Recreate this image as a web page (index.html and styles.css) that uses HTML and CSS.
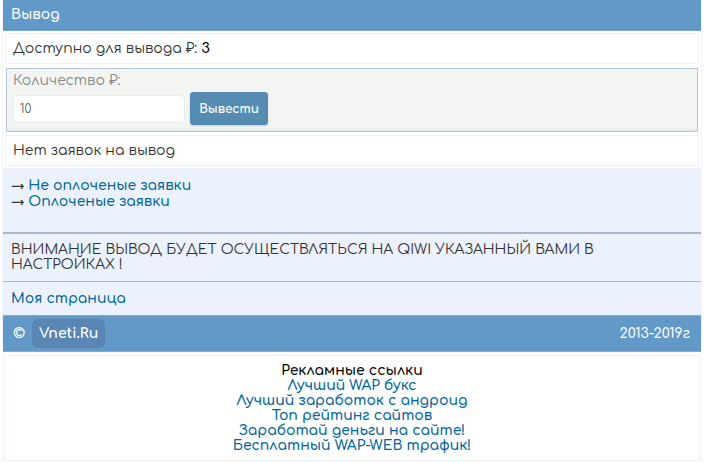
FILE: index.html
```html
<!DOCTYPE html>
<html lang="ru">
<head>
    <meta charset="UTF-8">
    <meta name="viewport" content="width=device-width, initial-scale=1.0">
    <title>Вывод</title>
    <link rel="stylesheet" href="styles.css">
</head>
<body>
    <div class="page">
        <header class="title">Вывод</header>

        <main>
            <div class="block">Доступно для вывода ₽: <b>3</b></div>

            <form class="form" action="#" method="post">
                <label for="amount">Количество ₽:</label>
                <div class="row">
                    <input type="text" id="amount" name="amount" value="10">
                    <button type="submit">Вывести</button>
                </div>
            </form>

            <div class="block">Нет заявок на вывод</div>

            <nav class="menu requests">
                <div>→ <a href="#">Не оплоченые заявки</a></div>
                <div>→ <a href="#">Оплоченые заявки</a></div>
            </nav>
            <div class="menu notice">ВНИМАНИЕ ВЫВОД БУДЕТ ОСУЩЕСТВЛЯТЬСЯ НА QIWI УКАЗАННЫЙ ВАМИ В НАСТРОЙКАХ !</div>
            <div class="menu"><a href="#">Моя страница</a></div>
        </main>

        <footer class="footer">
            <div class="copy">© <a href="#" class="site">Vneti.Ru</a></div>
            <span>2013-2019г</span>
        </footer>

        <div class="ads">
            <b>Рекламные ссылки</b>
            <a href="#">Лучший WAP букс</a>
            <a href="#">Лучший заработок с андроид</a>
            <a href="#">Топ рейтинг сайтов</a>
            <a href="#">Заработай деньги на сайте!</a>
            <a href="#">Бесплатный WAP-WEB трафик!</a>
        </div>
    </div>
</body>
</html>
```
FILE: styles.css
```css
* { box-sizing: border-box; }
body { margin: 0; background: #fff; color: #333; font: 400 14px/15px Comfortaa, Inter, sans-serif; }
a { color: #00659b; font-weight: 600; text-decoration: none; }
b { font-weight: 600; color: #000; }

.page { margin: 0 18px 0 2px; border: solid #f5f6fc; border-width: 0 1px; }

.title { height: 31px; padding: 7px 8px; background: #6399c8; border-bottom: 1px solid #82add3; color: #fff; font-weight: 600; box-shadow: inset 0 -1px #5590c3; }

.block { margin: 2px; padding: 7px; border: 1px solid #edf1fd; }

.form { margin: 4px 3px 3px; padding: 4px 6px 6px; background: #f3f5f3; border: 1px solid #b5c6d8; box-shadow: inset 0 -2px #e7edef; color: #888; }
.form label { display: block; line-height: 16px; }
.row { display: flex; align-items: center; gap: 5px; margin-top: 3px; }
.row input { width: 172px; height: 28px; padding: 0 6px; border: 1px solid #e9ebec; border-radius: 4px; background: #fff; color: #666; font: 400 12px Comfortaa, Inter, sans-serif; }
.row button { width: 78px; height: 33px; padding: 0; border: 1px solid #568cb2; border-radius: 3px; background: #568cb2; color: #fff; font: 700 12px Comfortaa, Inter, sans-serif; box-shadow: 0 1px 2px #ccc; cursor: pointer; }
.row button:hover { background: #477da4; }

.menu { padding: 9px 8px; background: #ebf2fe; }
.menu a { text-shadow: 0 0 2px #fff; }
.requests { min-height: 66px; padding-top: 10px; border-bottom: 2px solid #aab3d2; line-height: 16px; }
.notice { padding: 8px 8px 9px; border-bottom: 1px solid #b0b3ce; }

.footer { display: flex; justify-content: space-between; align-items: center; height: 37px; padding: 0 11px 0 10px; background: #6399c8; border: solid #82add3; border-width: 1px 0; color: #fff; font-weight: 500; }
.copy { display: flex; align-items: center; gap: 7px; font-weight: 700; }
.site { padding: 7px; border-radius: 6px; background: #5986b2; color: #fff; font-weight: 700; }

.ads { display: flex; flex-direction: column; align-items: center; margin: 3px 1px; padding: 7px; border: 1px solid #edf1fd; }
```
